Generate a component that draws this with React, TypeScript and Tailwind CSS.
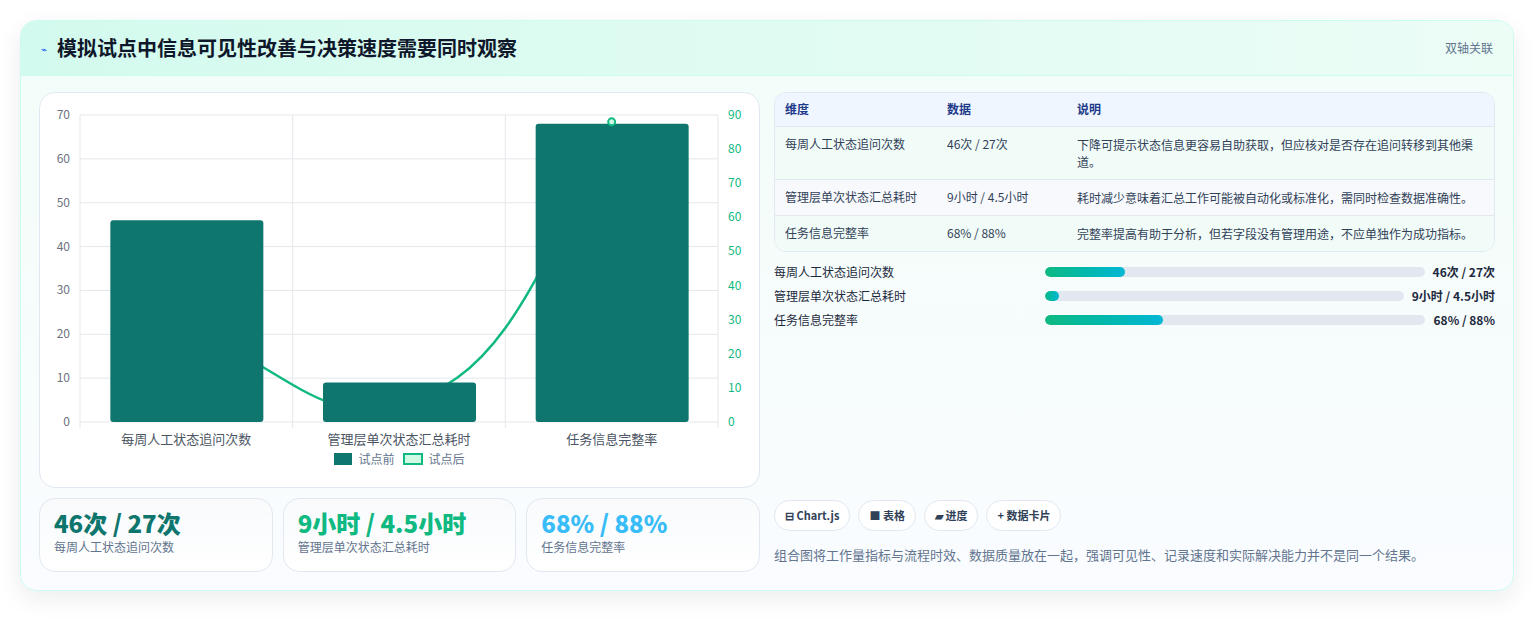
import { type ReactNode } from 'react'

const font = { fontFamily: '"Noto Sans CJK SC", "Noto Sans", sans-serif' }

const rows = [
  { dim: '每周人工状态追问次数', data: '46次 / 27次', note: '下降可提示状态信息更容易自助获取，但应核对是否存在追问转移到其他渠道。' },
  { dim: '管理层单次状态汇总耗时', data: '9小时 / 4.5小时', note: '耗时减少意味着汇总工作可能被自动化或标准化，需同时检查数据准确性。' },
  { dim: '任务信息完整率', data: '68% / 88%', note: '完整率提高有助于分析，但若字段没有管理用途，不应单独作为成功指标。' },
]

const progress = [
  { label: '每周人工状态追问次数', value: '46次 / 27次', pct: 21 },
  { label: '管理层单次状态汇总耗时', value: '9小时 / 4.5小时', pct: 4 },
  { label: '任务信息完整率', value: '68% / 88%', pct: 31 },
]

function Chart() {
  const x0 = 40, x1 = 678, y0 = 22, y1 = 329
  const h = y1 - y0
  const cw = (x1 - x0) / 3
  const bars = [46, 9, 68]
  const line = [27, 4.5, 88]
  const cx = (i: number) => x0 + cw * i + cw / 2
  const ly = (v: number) => y1 - (v / 90) * h
  const pts = line.map((v, i) => [cx(i), ly(v)])
  const path = `M${pts[0][0]},${pts[0][1]} C${pts[0][0] + 90},${pts[0][1] + 30} ${pts[1][0] - 80},${pts[1][1] + 20} ${pts[1][0]},${pts[1][1]} C${pts[1][0] + 90},${pts[1][1] - 30} ${pts[2][0] - 90},${pts[2][1] + 200} ${pts[2][0]},${pts[2][1]}`
  return (
    <svg width="720" height="358" className="block" style={font}>
      {[0, 1, 2, 3, 4, 5, 6, 7].map((i) => {
        const y = y1 - (i / 7) * h
        return (
          <g key={i}>
            <line x1={x0} x2={x1} y1={y} y2={y} stroke="#e5e7eb" />
            <text x={x0 - 10} y={y + 4} textAnchor="end" fontSize="12" fill="#6b7280">{i * 10}</text>
          </g>
        )
      })}
      {[0, 1, 2, 3, 4, 5, 6, 7, 8, 9].map((i) => (
        <text key={i} x={x1 + 10} y={y1 - (i / 9) * h + 4} fontSize="12" fill="#10b981">{i * 10}</text>
      ))}
      {[0, 1, 2, 3].map((i) => (
        <line key={i} x1={x0 + cw * i} x2={x0 + cw * i} y1={y0} y2={y1 + 6} stroke="#e5e7eb" />
      ))}
      <path d={path} fill="none" stroke="#10b981" strokeWidth="2.5" />
      {bars.map((v, i) => {
        const bh = (v / 70) * h
        return <rect key={i} x={cx(i) - 76} y={y1 - bh} width="153" height={bh} rx="3" fill="#0f766e" />
      })}
      <circle cx={pts[2][0]} cy={pts[2][1]} r="3.5" fill="#d1fae5" stroke="#10b981" strokeWidth="2" />
      {['每周人工状态追问次数', '管理层单次状态汇总耗时', '任务信息完整率'].map((t, i) => (
        <text key={t} x={cx(i)} y={y1 + 22} textAnchor="middle" fontSize="13" fill="#4b5563">{t}</text>
      ))}
    </svg>
  )
}

function Chip({ children }: { children: ReactNode }) {
  return (
    <span className="rounded-full border border-slate-200 bg-white px-2.5 py-1.5 text-[11px] font-bold text-slate-700">{children}</span>
  )
}

export default function App() {
  return (
    <div className="min-h-[620px] bg-white p-5" style={font}>
      <div className="overflow-hidden rounded-2xl border border-teal-100 bg-gradient-to-b from-[#f2fdf8] to-[#fafcff] shadow-[0_8px_24px_rgba(15,23,42,0.08)]">
        <div className="flex h-[55px] items-center justify-between border-b border-teal-100 bg-gradient-to-r from-[#d3faee] to-[#ecfdf6] px-5">
          <div className="flex items-center gap-2.5">
            <span className="text-[10px] text-blue-600">⌁</span>
            <h1 className="text-[20px] font-bold text-slate-900">模拟试点中信息可见性改善与决策速度需要同时观察</h1>
          </div>
          <span className="text-xs text-slate-500">双轴关联</span>
        </div>
        <div className="flex gap-3.5 px-[18px] pt-4 pb-[18px]">
          <div className="w-[721px] shrink-0">
            <div className="rounded-2xl border border-slate-200 bg-white">
              <Chart />
              <div className="flex items-center justify-center gap-2 pb-[20px] text-xs text-slate-500">
                <span className="flex items-center gap-1.5"><span className="h-3 w-[18px] bg-[#0f766e]" />试点前</span>
                <span className="flex items-center gap-1.5"><span className="h-3 w-[20px] border-2 border-[#10b981] bg-[#d1fae5]" />试点后</span>
              </div>
            </div>
            <div className="mt-2.5 grid grid-cols-3 gap-2.5">
              {[
                ['46次 / 27次', '每周人工状态追问次数', 'text-[#0f766e]'],
                ['9小时 / 4.5小时', '管理层单次状态汇总耗时', 'text-[#10b981]'],
                ['68% / 88%', '任务信息完整率', 'text-[#38bdf8]'],
              ].map(([v, l, c]) => (
                <div key={l} className="h-[74px] rounded-2xl border border-slate-200 bg-gradient-to-b from-[#f8fafc] to-white px-3.5 pt-2">
                  <div className={`text-[24px] font-extrabold leading-8 ${c}`}>{v}</div>
                  <div className="text-xs text-slate-500">{l}</div>
                </div>
              ))}
            </div>
          </div>
          <div className="flex min-w-0 flex-1 flex-col">
            <div className="overflow-hidden rounded-xl border border-slate-200 bg-[#f7fbff]">
              <table className="w-full text-left text-xs text-slate-700">
                <thead className="bg-[#eff6ff] text-[#1e3a8a]">
                  <tr className="h-[33px] border-b border-slate-200">
                    <th className="w-[172px] pl-2.5 font-semibold">维度</th>
                    <th className="w-[130px] font-semibold">数据</th>
                    <th className="font-semibold">说明</th>
                  </tr>
                </thead>
                <tbody>
                  {rows.map((r, i) => (
                    <tr key={r.dim} className={`border-b border-slate-200 last:border-0 ${i === 1 ? 'bg-[#f7f9fd]' : 'bg-[#f1fcf8]'}`}>
                      <td className="py-[9px] pl-2.5 align-top">{r.dim}</td>
                      <td className="py-[9px] align-top">{r.data}</td>
                      <td className="py-[9px] pr-4 align-top leading-[17px]">{r.note}</td>
                    </tr>
                  ))}
                </tbody>
              </table>
            </div>
            <div className="mt-3 flex flex-col gap-[8px]">
              {progress.map((p) => (
                <div key={p.label} className="flex items-center gap-2 text-xs text-slate-800">
                  <span className="w-[263px] shrink-0">{p.label}</span>
                  <div className="h-2.5 flex-1 overflow-hidden rounded-full bg-slate-200">
                    <div className="h-full rounded-full bg-gradient-to-r from-[#10b981] to-[#06b6d4]" style={{ width: `${p.pct}%` }} />
                  </div>
                  <span className="font-bold text-slate-800">{p.value}</span>
                </div>
              ))}
            </div>
            <div className="mt-auto flex gap-2">
              <Chip>⊟ Chart.js</Chip>
              <Chip>■ 表格</Chip>
              <Chip>▰ 进度</Chip>
              <Chip>+ 数据卡片</Chip>
            </div>
            <p className="mt-3.5 mb-2 text-[13px] text-slate-500">组合图将工作量指标与流程时效、数据质量放在一起，强调可见性、记录速度和实际解决能力并不是同一个结果。</p>
          </div>
        </div>
      </div>
    </div>
  )
}
